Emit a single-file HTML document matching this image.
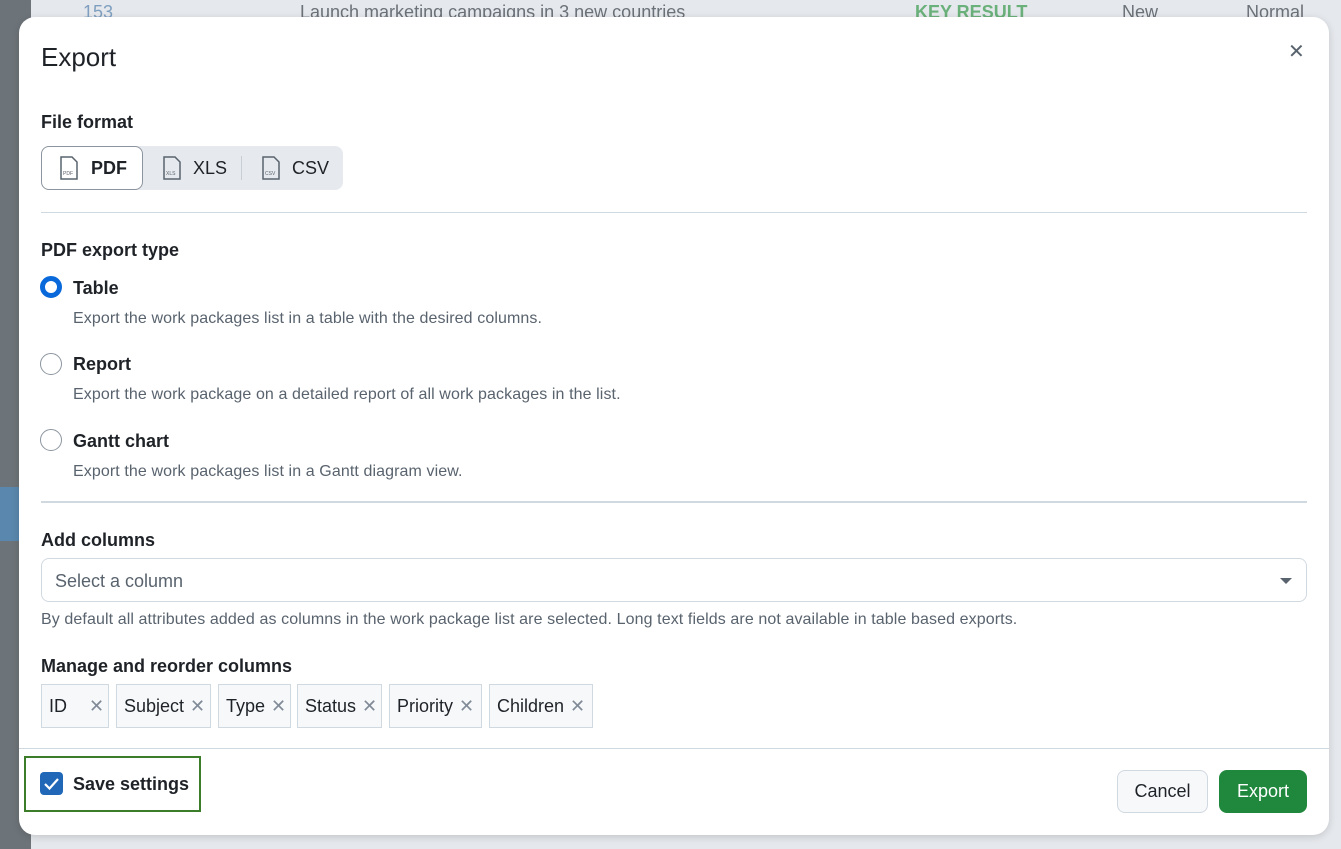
<!DOCTYPE html>
<html><head><style>
*{box-sizing:border-box;margin:0;padding:0}
body{width:1341px;height:849px;overflow:hidden;background:#e5e8ec;font-family:"Liberation Sans",sans-serif;color:#1f2328;position:relative}
.a{position:absolute;white-space:nowrap}
.side{left:0;top:0;width:31px;height:849px;background:#6d7479}
.modal{left:19px;top:17px;width:1310px;height:818px;background:#fff;border-radius:16px;box-shadow:0 2px 8px rgba(0,0,0,.15)}
.b{font-weight:bold;font-size:18px}
.desc{font-size:16px;color:#59636e;letter-spacing:0.1px}
.hr{height:1px;background:#d1d9e0}
.radio{width:22px;height:22px;border-radius:50%;border:1.5px solid #8c959f;background:#fff}
.chip{top:684px;height:44px;border:1px solid #d1d9e0;background:#f6f8fa;font-size:18px;padding:11px 7px;color:#1f2328}
.chip span{color:#818b98;margin-left:6px}
</style></head><body>
<div class="a side"></div>
<div class="a" style="left:0;top:487px;width:19px;height:54px;background:#5a87ad"></div>
<div class="a" style="left:83px;top:2px;font-size:18px;color:#7f9fc0">153</div>
<div class="a" style="left:300px;top:2px;font-size:18px;color:#6b7178">Launch marketing campaigns in 3 new countries</div>
<div class="a" style="left:915px;top:2px;font-size:18px;color:#6ab07a;font-weight:bold">KEY RESULT</div>
<div class="a" style="left:1122px;top:2px;font-size:18px;color:#6b7178">New</div>
<div class="a" style="left:1246px;top:2px;font-size:18px;color:#6b7178">Normal</div>
<div class="a modal"></div>
<div class="a" style="left:41px;top:42px;font-size:26px">Export</div>
<div class="a" style="left:1288px;top:39px;font-size:20px;color:#59636e">✕</div>
<div class="a b" style="left:41px;top:112px">File format</div>
<div class="a" style="left:41px;top:146px;width:302px;height:44px;background:#e6e9ed;border-radius:8px"></div>
<div class="a" style="left:41px;top:146px;width:102px;height:44px;background:#fff;border:1px solid #8c959f;border-radius:8px"></div>
<svg class="a" style="left:59px;top:156px" width="20" height="24" viewBox="0 0 20 24"><path d="M2 1h11l5 5v17H2z" fill="none" stroke="#59636e" stroke-width="1.5"/><text x="4" y="19" font-size="5" fill="#59636e" font-family="Liberation Sans">PDF</text></svg>
<div class="a" style="left:91px;top:158px;font-size:18px;font-weight:bold">PDF</div>
<svg class="a" style="left:162px;top:156px" width="20" height="24" viewBox="0 0 20 24"><path d="M2 1h11l5 5v17H2z" fill="none" stroke="#59636e" stroke-width="1.5"/><text x="4" y="19" font-size="5" fill="#59636e" font-family="Liberation Sans">XLS</text></svg>
<div class="a" style="left:193px;top:158px;font-size:18px">XLS</div>
<div class="a" style="left:241px;top:156px;width:1px;height:24px;background:#c8ced4"></div>
<svg class="a" style="left:261px;top:156px" width="20" height="24" viewBox="0 0 20 24"><path d="M2 1h11l5 5v17H2z" fill="none" stroke="#59636e" stroke-width="1.5"/><text x="4" y="19" font-size="5" fill="#59636e" font-family="Liberation Sans">CSV</text></svg>
<div class="a" style="left:292px;top:158px;font-size:18px">CSV</div>
<div class="a hr" style="left:41px;top:212px;width:1266px"></div>
<div class="a b" style="left:41px;top:240px">PDF export type</div>
<div class="a radio" style="left:40px;top:276px;border:5px solid #0969da"></div>
<div class="a b" style="left:73px;top:278px">Table</div>
<div class="a desc" style="left:73px;top:310px">Export the work packages list in a table with the desired columns.</div>
<div class="a radio" style="left:40px;top:353px"></div>
<div class="a b" style="left:73px;top:354px">Report</div>
<div class="a desc" style="left:73px;top:386px">Export the work package on a detailed report of all work packages in the list.</div>
<div class="a radio" style="left:40px;top:429px"></div>
<div class="a b" style="left:73px;top:431px">Gantt chart</div>
<div class="a desc" style="left:73px;top:463px">Export the work packages list in a Gantt diagram view.</div>
<div class="a" style="left:41px;top:501px;width:1266px;height:2px;background:#d1d9e0"></div>
<div class="a b" style="left:41px;top:530px">Add columns</div>
<div class="a" style="left:41px;top:558px;width:1266px;height:44px;border:1px solid #d1d9e0;border-radius:8px"></div>
<div class="a" style="left:55px;top:571px;font-size:18px;color:#59636e">Select a column</div>
<div class="a" style="left:1280px;top:578px;border-left:6px solid transparent;border-right:6px solid transparent;border-top:6px solid #59636e"></div>
<div class="a desc" style="left:41px;top:611px">By default all attributes added as columns in the work package list are selected. Long text fields are not available in table based exports.</div>
<div class="a b" style="left:41px;top:656px">Manage and reorder columns</div>
<div class="a chip" style="left:41px;width:68px">ID<span style="margin-left:22px">✕</span></div>
<div class="a chip" style="left:116px;width:95px">Subject<span>✕</span></div>
<div class="a chip" style="left:218px;width:73px">Type<span>✕</span></div>
<div class="a chip" style="left:297px;width:85px">Status<span>✕</span></div>
<div class="a chip" style="left:389px;width:93px">Priority<span>✕</span></div>
<div class="a chip" style="left:489px;width:104px">Children<span>✕</span></div>
<div class="a hr" style="left:19px;top:748px;width:1310px"></div>
<div class="a" style="left:24px;top:756px;width:177px;height:56px;border:2px solid #3c7d2a"></div>
<div class="a" style="left:40px;top:772px;width:23px;height:23px;border-radius:4px;background:#2067b8"></div>
<svg class="a" style="left:40px;top:772px" width="23" height="23"><path d="M5 12l4.5 4.5L18 7" fill="none" stroke="#fff" stroke-width="2.2"/></svg>
<div class="a b" style="left:73px;top:774px">Save settings</div>
<div class="a" style="left:1117px;top:770px;width:91px;height:43px;border:1px solid #d1d9e0;border-radius:8px;background:#f6f8fa;font-size:18px;text-align:center;line-height:41px">Cancel</div>
<div class="a" style="left:1219px;top:770px;width:88px;height:43px;border-radius:8px;background:#1f883d;color:#fff;font-size:18px;text-align:center;line-height:43px">Export</div>
</body></html>
